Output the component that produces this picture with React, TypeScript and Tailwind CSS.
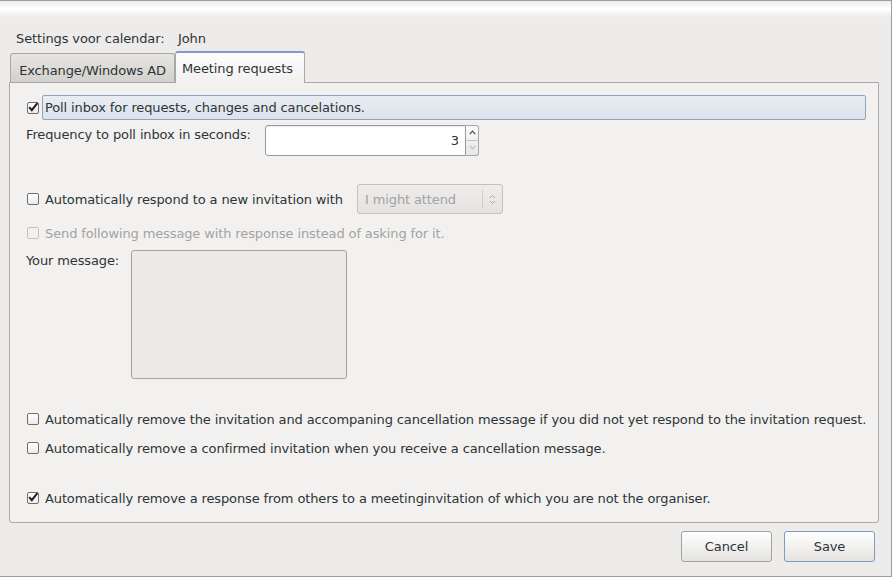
import React from 'react';

const Check = ({ checked, disabled }: { checked?: boolean; disabled?: boolean }) => (
  <span
    className={
      'relative flex h-[12px] w-[12px] shrink-0 items-center justify-center rounded-[2px] border ' +
      (disabled ? 'border-[#c4c3c0] bg-[#f2f1f0]' : 'border-[#6e6e6e] bg-linear-to-b from-white to-[#ecebea]')
    }
  >
    {checked && (
      <svg width="12" height="12" viewBox="0 0 12 12" className="absolute left-[-1px] top-[-2px]">
        <path d="M2.2 6.2 L4.8 9.2 L10.4 2.2" fill="none" stroke="#1e1e1e" strokeWidth="2" />
      </svg>
    )}
  </span>
);

const Option = ({ checked, text }: { checked?: boolean; text: string }) => (
  <div className="flex h-[16px] items-center pl-[17px]">
    <Check checked={checked} />
    <span className="ml-[6px] whitespace-nowrap pt-[1px]">{text}</span>
  </div>
);

export default function App() {
  return (
    <div className="flex h-[577px] w-[892px] flex-col overflow-hidden border-t border-r border-b border-[#9d9d9d] bg-[#edeceb] font-['DejaVu_Sans',sans-serif] text-[13px] leading-[16px] tracking-[-0.12px] text-[#2e3436]">
      {/* header band */}
      <div className="h-[16px] bg-linear-to-b from-[#efeeed] via-white to-[#edeceb]" />

      <div className="mt-[13px] flex h-[16px] pl-[16px] pt-[1px]">
        <span className="w-[162px]">Settings voor calendar:</span>
        <span>John</span>
      </div>

      {/* tabs */}
      <div className="mt-[5px] flex h-[31px] items-end pl-[10px]">
        <div className="flex h-[29px] w-[165px] items-center justify-center rounded-t-[3px] border border-b-0 border-[#a8a8a8] bg-linear-to-b from-[#e6e5e3] to-[#d3d1cd] pt-[5px]">
          Exchange/Windows AD
        </div>
        <div className="relative z-10 -mb-px flex h-[32px] w-[130px] items-center rounded-t-[3px] border border-b-0 border-[#a8a8a8] border-t-2 border-t-[#7f9dc4] bg-linear-to-b from-[#fdfdfd] to-[#f2f1f0] pl-[6px] pt-[2px]">
          Meeting requests
        </div>
      </div>

      {/* panel */}
      <div className="ml-[9px] flex h-[441px] w-[870px] flex-col rounded-b-[3px] border border-[#a8a8a8] bg-[#f2f1f0]">
        <div className="mt-[12px] flex h-[25px] items-center pl-[17px] pr-[12px]">
          <Check checked />
          <div className="ml-[3px] flex h-[25px] flex-1 items-center rounded-[2px] border border-[#8ea3bf] bg-linear-to-b from-[#e8edf3] to-[#dde3eb] pl-[2px] pt-[1px]">
            Poll inbox for requests, changes and cancelations.
          </div>
        </div>

        <div className="mt-[5px] flex pl-[16px]">
          <span className="w-[239px] pt-[2px]">Frequency to poll inbox in seconds:</span>
          <div className="flex h-[31px] w-[201px] items-center justify-end rounded-l-[3px] border border-[#9a9a9a] bg-white pr-[6px] pt-[1px] shadow-[inset_0_1px_1px_rgba(0,0,0,0.08)]">
            3
          </div>
          <div className="flex h-[31px] w-[13px] flex-col rounded-r-[3px] border border-l-0 border-[#a6a6a6] bg-linear-to-b from-[#fafafa] to-[#e8e7e6]">
            <div className="flex h-1/2 items-center justify-center border-b border-[#c8c8c8]">
              <svg width="7" height="5" viewBox="0 0 7 5">
                <path d="M0.8 4.2 L3.5 1.2 L6.2 4.2" fill="none" stroke="#4a4a4a" strokeWidth="1.2" />
              </svg>
            </div>
            <div className="flex h-1/2 items-center justify-center">
              <svg width="7" height="5" viewBox="0 0 7 5">
                <path d="M0.8 0.8 L3.5 3.8 L6.2 0.8" fill="none" stroke="#bdbdbd" strokeWidth="1.2" />
              </svg>
            </div>
          </div>
        </div>

        <div className="mt-[28px] flex h-[30px] items-center pl-[17px]">
          <Check />
          <span className="ml-[6px] w-[312px] whitespace-nowrap pt-[2px]">Automatically respond to a new invitation with</span>
          <div className="flex h-[30px] w-[146px] items-center rounded-[3px] border border-[#c2c1be] bg-linear-to-b from-[#eeedec] to-[#e4e3e1] text-[#a3a3a3]">
            <span className="flex-1 pl-[7px] pt-[2px]">I might attend</span>
            <span className="h-[18px] w-px bg-[#cfcecb]" />
            <span className="flex w-[19px] justify-center">
              <svg width="7" height="11" viewBox="0 0 7 11">
                <path d="M1 4 L3.5 1.5 L6 4 M1 7 L3.5 9.5 L6 7" fill="none" stroke="#a8a8a8" strokeWidth="1" />
              </svg>
            </span>
          </div>
        </div>

        <div className="mt-[11px] flex h-[16px] items-center pl-[17px] text-[#a3a3a3]">
          <Check disabled />
          <span className="ml-[6px] whitespace-nowrap pt-[1px]">Send following message with response instead of asking for it.</span>
        </div>

        <div className="mt-[9px] flex pl-[16px]">
          <span className="w-[105px] pt-[3px]">Your message:</span>
          <div className="h-[129px] w-[216px] rounded-[3px] border border-[#a3a3a3] bg-[#ebeae9]" />
        </div>

        <div className="mt-[32px]">
          <Option text="Automatically remove the invitation and accompaning cancellation message if you did not yet respond to the invitation request." />
        </div>
        <div className="mt-[13px]">
          <Option text="Automatically remove a confirmed invitation when you receive a cancellation message." />
        </div>
        <div className="mt-[34px]">
          <Option checked text="Automatically remove a response from others to a meetinginvitation of which you are not the organiser." />
        </div>
      </div>

      {/* buttons */}
      <div className="mt-[8px] flex justify-end gap-[12px] pr-[16px]">
        <button className="h-[31px] w-[91px] rounded-[3px] border border-[#a3a3a3] bg-linear-to-b from-white to-[#e4e3e1] pt-[1px] text-[#2e3436]">
          Cancel
        </button>
        <button className="h-[31px] w-[91px] rounded-[3px] border border-[#7f9bc0] bg-linear-to-b from-white to-[#e4e3e1] pt-[1px] text-[#2e3436]">
          Save
        </button>
      </div>
    </div>
  );
}
